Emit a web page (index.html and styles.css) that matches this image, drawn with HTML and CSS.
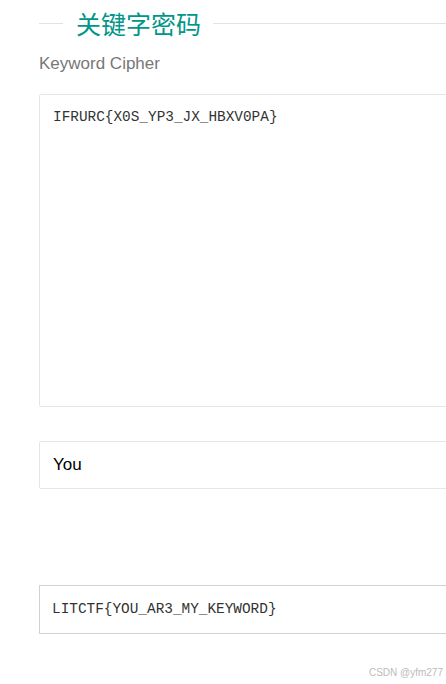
FILE: index.html
```html
<!DOCTYPE html>
<html lang="zh">
<head>
<meta charset="utf-8">
<title>关键字密码</title>
<link rel="stylesheet" href="styles.css">
</head>
<body>
<div class="page">
  <div class="title-row">
    <span class="line line-left"></span>
    <h1 class="title">关键字密码</h1>
    <span class="line line-right"></span>
  </div>
  <div class="subtitle">Keyword Cipher</div>
  <div class="textarea">IFRURC{X0S_YP3_JX_HBXV0PA}</div>
  <div class="input">You</div>
  <div class="result">LITCTF{YOU_AR3_MY_KEYWORD}</div>
</div>
<div class="watermark">CSDN @yfm277</div>
</body>
</html>
```
FILE: styles.css
```css
html, body {
  margin: 0;
  padding: 0;
  background: #fff;
  overflow: hidden;
}
body {
  width: 446px;
  height: 684px;
  position: relative;
  font-family: "Liberation Sans", Arial, "Noto Sans CJK SC", sans-serif;
}
.page {
  padding: 9px 0 0 39px;
  overflow: hidden;
}
.title-row {
  display: flex;
  align-items: center;
  height: 28px;
}
.line {
  height: 1px;
  background: #e2e2e2;
}
.line-left {
  width: 24px;
  margin-right: 13px;
}
.line-right {
  flex: 1;
  margin-left: 12px;
}
.title {
  margin: 0;
  font-family: "Noto Sans CJK SC", sans-serif;
  font-weight: normal;
  font-size: 25px;
  line-height: 28px;
  color: #009688;
}
.subtitle {
  margin-top: 17px;
  font-size: 17px;
  line-height: 20px;
  color: #777;
}
.textarea {
  margin-top: 20px;
  width: 480px;
  border: 1px solid #e6e6e6;
  border-radius: 2px;
  padding: 12px 0 0 13px;
  height: 299px;
  font-family: "Liberation Mono", "Courier New", monospace;
  font-size: 14.4px;
  line-height: 20px;
  color: #333;
}
.input {
  margin-top: 34px;
  width: 480px;
  height: 46px;
  border: 1px solid #e6e6e6;
  border-radius: 2px;
  padding-left: 13px;
  font-size: 17px;
  line-height: 46px;
  color: #000;
}
.result {
  margin-top: 96px;
  width: 480px;
  height: 47px;
  border: 1px solid #d2d2d2;
  padding-left: 12px;
  font-family: "Liberation Mono", "Courier New", monospace;
  font-size: 14.4px;
  line-height: 47px;
  color: #333;
}
.watermark {
  position: absolute;
  right: 3px;
  bottom: 5px;
  font-size: 10px;
  line-height: 12px;
  color: #bbb;
}
```
